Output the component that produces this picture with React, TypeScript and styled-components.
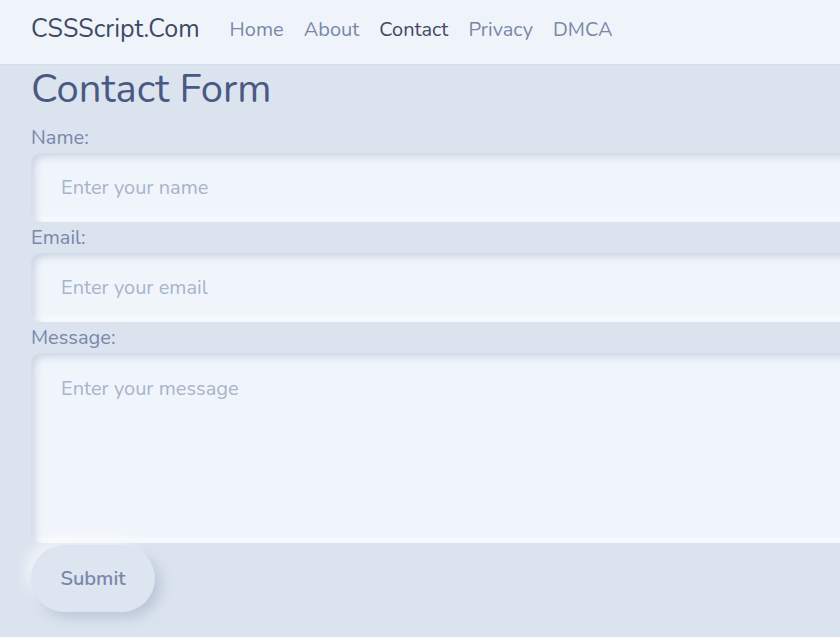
import React from "react";
import styled, { createGlobalStyle } from "styled-components";

const GlobalStyle = createGlobalStyle`
  html, body {
    margin: 0;
    padding: 0;
    background-color: #dbe3ef;
    overflow-x: hidden;
  }
  body {
    font-family: "Nunito", "Lato", "Noto Sans", sans-serif;
  }
  * {
    box-sizing: border-box;
  }
`;

// --- Header ---

const Header = styled.header`
  height: 65px;
  display: flex;
  align-items: center;
  padding: 0 0 6px 31px;
  background-color: #eff4fb;
  border-bottom: 1px solid #d5deea;
`;

const Logo = styled.a`
  font-size: 25px;
  color: #3f4a62;
  text-decoration: none;
  margin-right: 30px;
`;

const Nav = styled.nav`
  display: flex;
  align-items: center;
  gap: 20px;
`;

const NavLink = styled.a<{ $active?: boolean }>`
  font-size: 20px;
  color: ${({ $active }) => ($active ? "#3f4a62" : "#7b87a6")};
  text-decoration: none;
`;

// --- Form ---

const Main = styled.main`
  padding: 0 0 24px 31px;
`;

const Title = styled.h1`
  margin: 0;
  padding-bottom: 8px;
  font-size: 40px;
  font-weight: 400;
  line-height: 49px;
  color: #4a5983;
`;

const Form = styled.form`
  display: flex;
  flex-direction: column;
  align-items: flex-start;
`;

const Label = styled.label`
  font-size: 20px;
  line-height: 31px;
  color: #7a87ab;
`;

const fieldStyles = `
  width: calc(100% + 40px);
  padding: 0 30px;
  border: none;
  outline: none;
  border-radius: 10px;
  background-color: #f0f5fc;
  font-family: inherit;
  font-size: 20px;
  color: #4a5983;
  box-shadow: inset 4px 4px 7px rgba(163, 177, 198, 0.45),
    inset -4px -4px 7px rgba(255, 255, 255, 0.7);

  &::placeholder {
    color: #a9b3c9;
  }
`;

const Input = styled.input`
  ${fieldStyles}
  height: 69px;
`;

const TextArea = styled.textarea`
  ${fieldStyles}
  height: 190px;
  padding-top: 22px;
  resize: none;
`;

const SubmitButton = styled.button`
  margin-top: 2px;
  width: 124px;
  height: 67px;
  border: none;
  border-radius: 34px;
  background-color: #dde5f0;
  font-family: inherit;
  font-size: 20px;
  font-weight: 600;
  color: #7a87ab;
  cursor: pointer;
  box-shadow: 6px 6px 12px rgba(163, 177, 198, 0.55),
    -6px -6px 12px rgba(255, 255, 255, 0.6);
`;

const navItems = ["Home", "About", "Contact", "Privacy", "DMCA"];

const App: React.FC = () => {
  return (
    <>
      <GlobalStyle />
      <Header>
        <Logo href="#">CSSScript.Com</Logo>
        <Nav>
          {navItems.map((item) => (
            <NavLink key={item} href="#" $active={item === "Contact"}>
              {item}
            </NavLink>
          ))}
        </Nav>
      </Header>

      <Main>
        <Title>Contact Form</Title>
        <Form onSubmit={(e) => e.preventDefault()}>
          <Label htmlFor="name">Name:</Label>
          <Input id="name" type="text" placeholder="Enter your name" />
          <Label htmlFor="email">Email:</Label>
          <Input id="email" type="email" placeholder="Enter your email" />
          <Label htmlFor="message">Message:</Label>
          <TextArea id="message" placeholder="Enter your message" />
          <SubmitButton type="submit">Submit</SubmitButton>
        </Form>
      </Main>
    </>
  );
};

export default App;
